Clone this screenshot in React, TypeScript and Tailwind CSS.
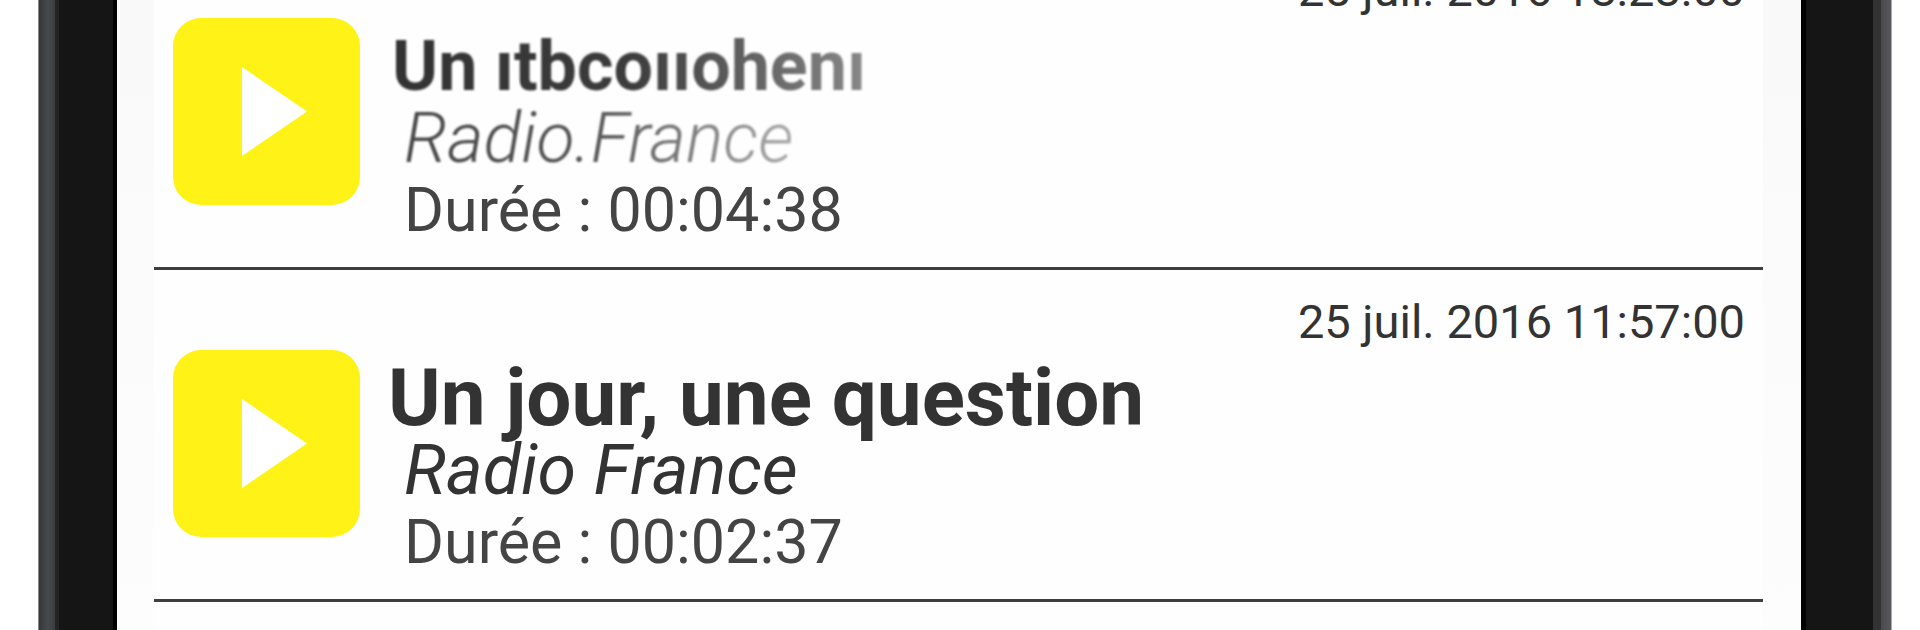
type Podcast = {
  title: string;
  author: string;
  duration: string;
  date: string;
  faded?: boolean;
};

const PODCASTS: Podcast[] = [
  {
    title: "Un ıtbcoııohenı",
    author: "Radio.France",
    duration: "00:04:38",
    date: "25 juil. 2016 18:28:00",
    faded: true,
  },
  {
    title: "Un jour, une question",
    author: "Radio France",
    duration: "00:02:37",
    date: "25 juil. 2016 11:57:00",
  },
];

function PlayButton({ label }: { label: string }) {
  return (
    <button
      aria-label={label}
      className="size-[187px] shrink-0 cursor-pointer rounded-[28px] bg-[#fff217]"
    >
      <svg viewBox="0 0 187 187" className="size-full" aria-hidden="true">
        <path d="M69 49 L134 93.5 L69 138 Z" fill="#fff" />
      </svg>
    </button>
  );
}

function PodcastRow({ podcast }: { podcast: Podcast }) {
  const { title, author, duration, date, faded } = podcast;
  return (
    <li className="border-b-3 border-[#3c3f3e] pt-6 pb-[21px]">
      <p className="pr-[18px] text-right text-[47px] leading-[56px] text-[#333]">{date}</p>
      <div className="flex items-start gap-7 pl-[19px]">
        <PlayButton label={`Lire ${title}`} />
        <div className="min-w-0 pt-3 leading-[72px] whitespace-nowrap">
          {faded ? (
            <>
              <h2 className="w-fit bg-linear-to-r from-[#333] via-[#3c3c3c] to-[#888] bg-clip-text pl-1 text-[70px] leading-[72px] font-bold text-transparent blur-[1px]">
                {title}
              </h2>
              <p className="w-fit bg-linear-to-r from-[#444] via-[#555] to-[#aaa] bg-clip-text pl-4 text-[70px] leading-[72px] font-light text-transparent italic blur-[1px]">
                {author}
              </p>
            </>
          ) : (
            <>
              <h2 className="text-[80px] leading-[72px] font-bold text-[#333]">{title}</h2>
              <p className="pl-4 text-[70px] leading-[72px] text-[#333] italic">{author}</p>
            </>
          )}
          <p className="pl-4 text-[61px] leading-[72px] text-[#444]">Durée : {duration}</p>
        </div>
      </div>
    </li>
  );
}

export default function App() {
  return (
    <div className="flex h-screen overflow-hidden bg-white pr-7 pl-[38px] font-['Roboto',sans-serif]">
      {/* Left bezel */}
      <div className="flex shrink-0 border-l border-[#888]">
        <div className="w-4 bg-linear-to-r from-[#343536] via-[#48494b] to-[#3c3d3e]" />
        <div className="w-1 bg-[#242424]" />
        <div className="w-[54px] bg-[#151515]" />
        <div className="w-1 bg-black" />
      </div>

      {/* Screen */}
      <main className="flex min-w-0 flex-1 flex-col justify-end bg-linear-to-b from-[#f9f9f9] to-[#fdfdfd] pr-[38px] pl-[37px]">
        <ul className="shrink-0 bg-[#fefefe] pb-7">
          {PODCASTS.map((podcast) => (
            <PodcastRow key={podcast.date} podcast={podcast} />
          ))}
        </ul>
      </main>

      {/* Right bezel */}
      <div className="flex shrink-0 border-r border-[#aaa]">
        <div className="w-[5px] bg-black" />
        <div className="w-[67px] bg-[#151515]" />
        <div className="w-2 bg-[#333334]" />
        <div className="w-[10px] bg-linear-to-r from-[#4a4a4c] to-[#59595b]" />
      </div>
    </div>
  );
}
